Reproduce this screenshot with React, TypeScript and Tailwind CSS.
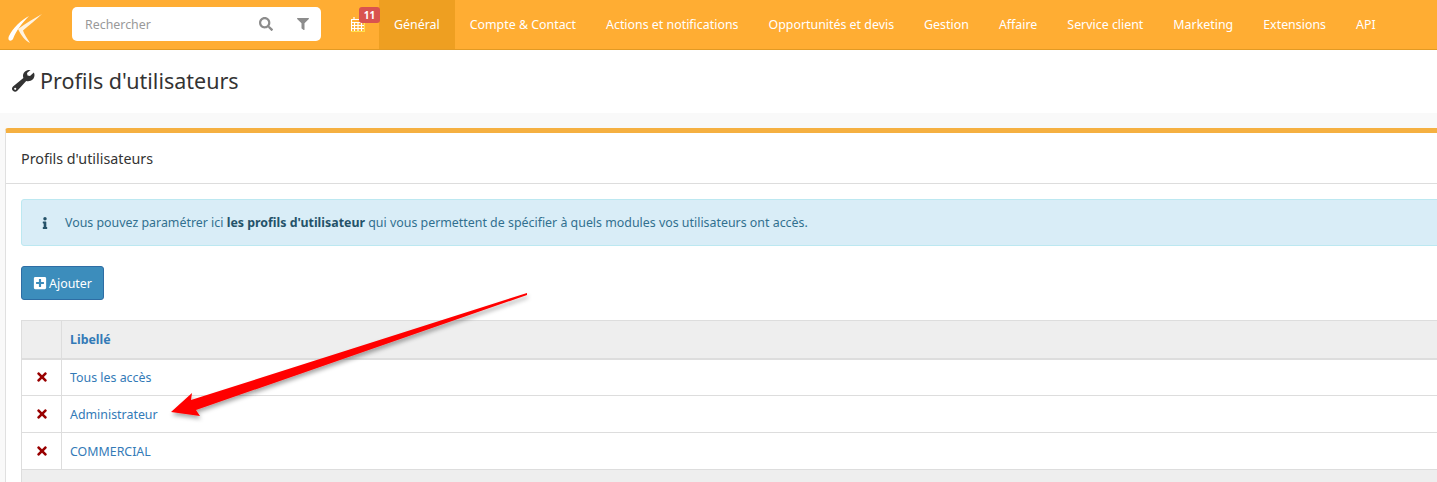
import { FaSearch, FaFilter, FaInfo, FaPlusSquare, FaTimes } from 'react-icons/fa';

const navItems = [
  'Général',
  'Compte & Contact',
  'Actions et notifications',
  'Opportunités et devis',
  'Gestion',
  'Affaire',
  'Service client',
  'Marketing',
  'Extensions',
  'API',
];

const profiles = ['Tous les accès', 'Administrateur', 'COMMERCIAL'];

function Logo() {
  return (
    <svg width="40" height="40" viewBox="0 0 40 40" className="shrink-0">
      <path d="M26 11 C18 15 10 23 6 31 C4 36 8 37 10 34 C13 26 19 18 26 11 Z" fill="#fff" />
      <path d="M39 9 C32 13 23 18 15 24 C18 30 22 36 27 38 C24 33 21 29 20 25.5 C26 20 33 15 39 9 Z" fill="#fff" opacity="0.85" />
    </svg>
  );
}

function WrenchIcon() {
  return (
    <svg width="23" height="22" viewBox="0 0 23 22" className="mr-[5px] shrink-0">
      <path
        d="M22.5 5 C22.5 4 22.2 3.2 21.8 2.5 L18 6 L15.5 5.5 L15 3 L18.5 0 C14.5 -0.5 11 2 11 6 C11 6.8 11.2 7.4 11.4 8 L1 16.5 C-0.4 18 -0.3 19.5 1 20.8 C2.3 22.1 4 22.1 5.3 20.8 L14.2 11 C18.5 12 22.5 9.5 22.5 5 Z"
        fill="#333"
      />
      <circle cx="3.2" cy="18.8" r="1.1" fill="#fff" />
    </svg>
  );
}

function CalendarIcon() {
  return (
    <svg width="14" height="15" viewBox="0 0 14 15" className="shrink-0">
      <path
        d="M3 0v3M10 0v3M0.5 2.5h13v12h-13zM0.5 5.5h13M0.5 8.5h13M0.5 11.5h13M3.5 5.5v9M7 5.5v9M10.5 5.5v9"
        fill="none"
        stroke="#fff"
        strokeWidth="1.2"
      />
      <path d="M0 14.5h14M13.5 3v12" stroke="#ffe14d" strokeWidth="1" />
    </svg>
  );
}

export default function App() {
  return (
    <div className="relative h-[482px] w-[1437px] overflow-hidden bg-[#f9f9f9] font-['Noto_Sans',sans-serif] text-[12.4px] text-[#333]">
      <header className="flex h-[50px] items-stretch border-b border-[#e29a24] bg-[#ffad33]">
        <div className="flex w-[72px] shrink-0 items-center pl-[3px]">
          <Logo />
        </div>
        <div className="mb-[1px] flex h-[34px] w-[249px] shrink-0 items-center self-center rounded-[5px] bg-white pl-[13px] pr-[12px]">
          <span className="flex-1 pt-[2px] text-[#999]">Rechercher</span>
          <FaSearch className="mr-[24px] text-[14px] text-[#8c8c8c]" />
          <FaFilter className="text-[12px] text-[#8c8c8c]" />
        </div>
        <div className="relative flex w-[58px] shrink-0 items-center justify-end pr-[14px]">
          <CalendarIcon />
          <span className="absolute left-[38px] top-[7px] flex h-[16px] w-[21px] items-center justify-center rounded-[3px] bg-[#d9534f] text-[10px] font-bold text-white">
            11
          </span>
        </div>
        <nav className="flex items-stretch">
          {navItems.map((item, i) => (
            <a
              key={item}
              className={
                i === 0
                  ? 'flex items-center whitespace-nowrap bg-[#ee9f21] px-[15px] pt-[1px] text-white'
                  : 'flex items-center whitespace-nowrap px-[15px] pt-[1px] text-white'
              }
            >
              {item}
            </a>
          ))}
        </nav>
      </header>

      <div className="flex h-[63px] items-center bg-white pb-[2px] pl-[12px]">
        <WrenchIcon />
        <h1 className="pt-[1px] text-[21.5px] font-normal text-[#333]">Profils d'utilisateurs</h1>
      </div>

      <section className="ml-[5px] mt-[15px] w-[1500px] rounded-t-[3px] border-x border-t-[5px] border-x-[#e0e0e0] border-t-[#f5b041] bg-white">
        <div className="flex h-[51px] items-center border-b border-[#ddd] pl-[15px] pt-[1px] text-[14.3px]">
          Profils d'utilisateurs
        </div>
        <div className="px-[15px] pt-[15px]">
          <div className="flex h-[47px] items-center rounded-[3px] border border-[#bce8f1] bg-[#d9edf7] text-[#31708f]">
            <FaInfo className="ml-[17px] mr-[14px] text-[12px] text-[#245269]" />
            <p className="pt-[1px]">
              Vous pouvez paramétrer ici <b className="font-bold text-[#245269]">les profils d'utilisateur</b> qui vous
              permettent de spécifier à quels modules vos utilisateurs ont accès.
            </p>
          </div>

          <button className="mt-[20px] flex h-[34px] w-[83px] items-center justify-center gap-[2px] rounded-[3px] border border-[#2e6da4] bg-[#3c8dbc] text-white">
            <FaPlusSquare className="text-[14px]" />
            <span className="pt-[2px]">Ajouter</span>
          </button>

          <table className="mt-[20px] w-full border-collapse border border-[#ddd]">
            <thead>
              <tr className="h-[38px] border-b-2 border-[#ddd] bg-[#eee]">
                <th className="w-[40px] border-r border-[#ddd]" />
                <th className="pl-[8px] pt-[2px] text-left font-bold text-[#337ab7]">Libellé</th>
              </tr>
            </thead>
            <tbody>
              {profiles.map((name) => (
                <tr key={name} className="h-[37px] border-b border-[#ddd]">
                  <td className="border-r border-[#ddd]">
                    <FaTimes className="mx-auto text-[14px] text-[#990000]" />
                  </td>
                  <td className="pl-[8px] pt-[2px] text-[#337ab7]">{name}</td>
                </tr>
              ))}
              <tr className="h-[40px] bg-[#eee]">
                <td colSpan={2} />
              </tr>
            </tbody>
          </table>
        </div>
      </section>

      {/* annotation drawn over the page */}
      <svg className="pointer-events-none absolute left-0 top-0" width="1437" height="482">
        <defs>
          <filter id="arrow-shadow" x="-5%" y="-5%" width="110%" height="115%">
            <feDropShadow dx="1" dy="3" stdDeviation="2" floodColor="#000" floodOpacity="0.35" />
          </filter>
        </defs>
        <polygon
          points="527,293 191,400 192,393 171,412 200,416 196,410 527,295"
          fill="#ff0000"
          filter="url(#arrow-shadow)"
        />
      </svg>
    </div>
  );
}
